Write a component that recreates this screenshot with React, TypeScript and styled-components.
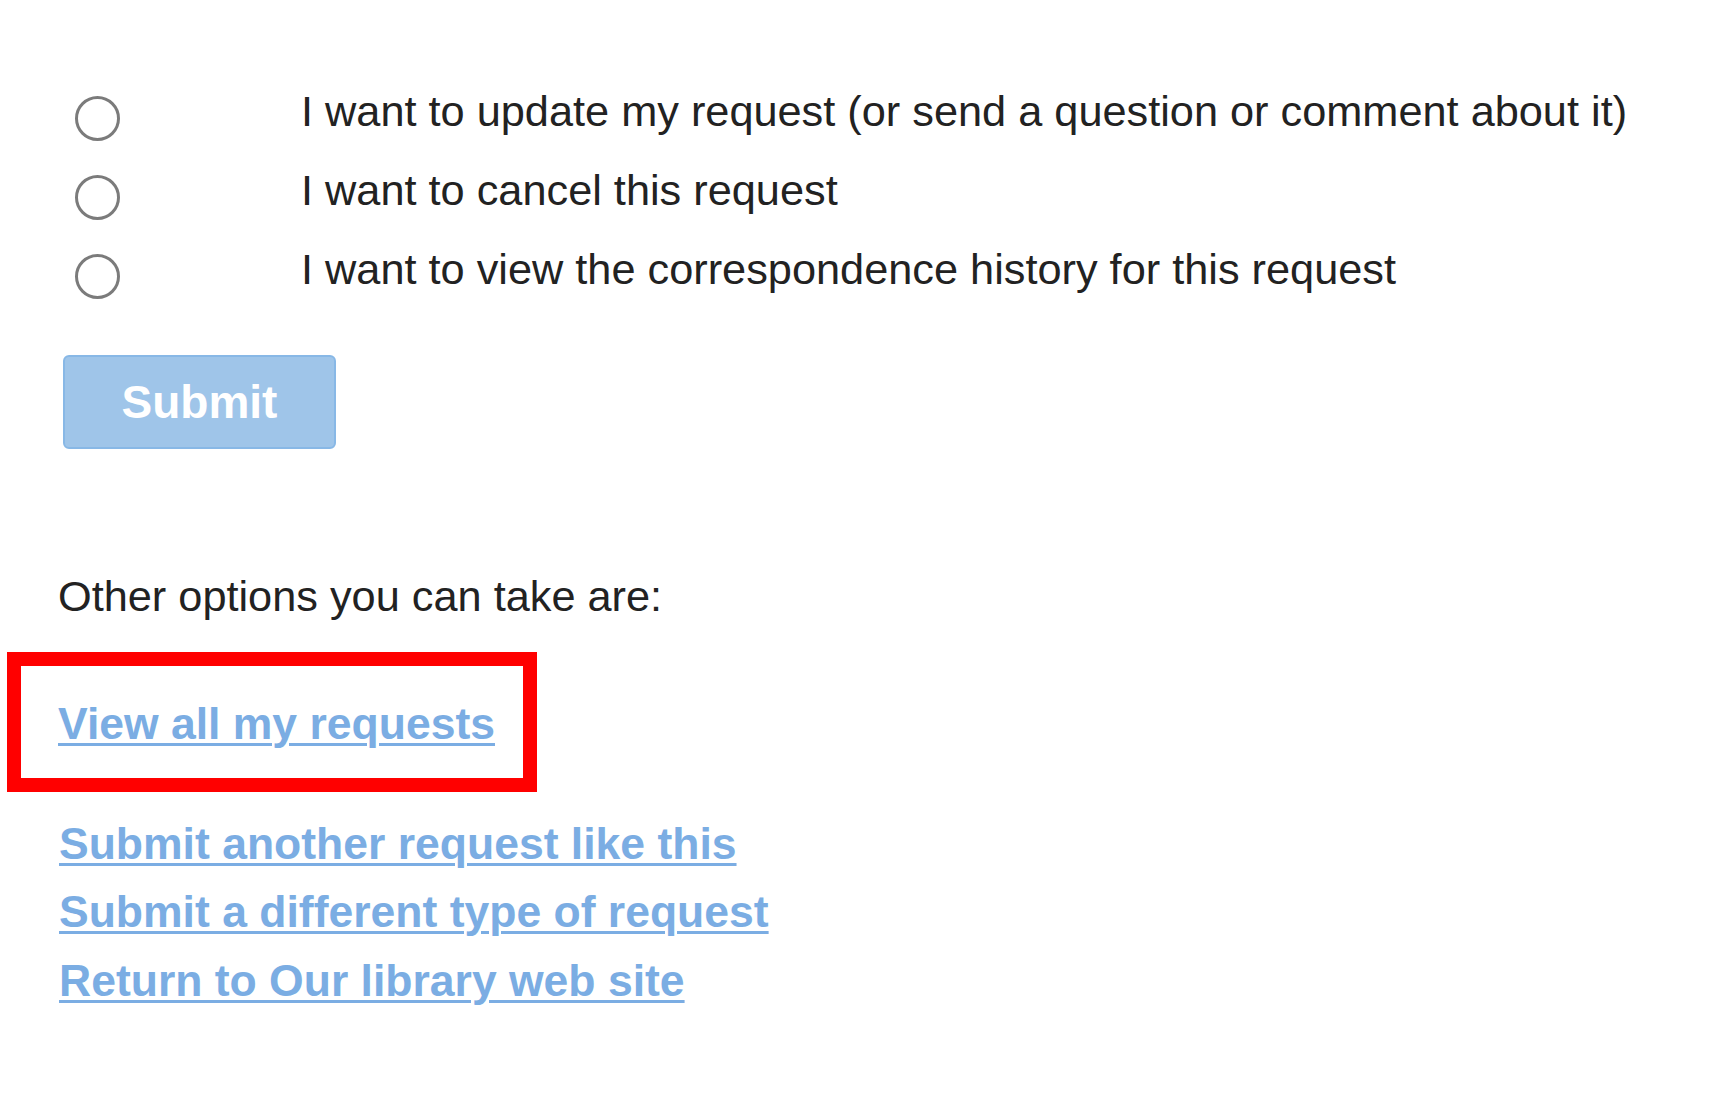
import React from "react";
import styled, { createGlobalStyle } from "styled-components";

const Global = createGlobalStyle`
  html, body {
    margin: 0;
    padding: 0;
    background: #ffffff;
  }
  body {
    font-family: "Liberation Sans", Arial, sans-serif;
    color: #222222;
  }
`;

const Page = styled.main`
  width: 1732px;
  height: 1117px;
  box-sizing: border-box;
  overflow: hidden;
  padding: 72px 0 0 58px;
  display: flex;
  flex-direction: column;
  align-items: flex-start;
`;

const Options = styled.fieldset`
  border: 0;
  margin: 0;
  padding: 0;
  display: flex;
  flex-direction: column;
`;

const OptionRow = styled.label`
  display: flex;
  align-items: center;
  height: 79px;
  font-size: 43.3px;
  line-height: 79px;
  white-space: nowrap;
  color: #222222;
`;

const Radio = styled.input.attrs({ type: "radio" })`
  appearance: none;
  -webkit-appearance: none;
  flex: none;
  box-sizing: border-box;
  width: 45px;
  height: 45px;
  margin: 13px 181px 0 17px;
  border: 3px solid #7b7b7b;
  border-radius: 50%;
  background: #ffffff;
`;

const SubmitButton = styled.button`
  display: block;
  margin: 46px 0 0 5px;
  width: 273px;
  height: 94px;
  padding: 0;
  box-sizing: border-box;
  background: #9fc5e9;
  border: 2px solid #88b8e6;
  border-radius: 6px;
  color: #ffffff;
  font-family: "Liberation Sans", Arial, sans-serif;
  font-weight: bold;
  font-size: 46px;
  line-height: 1;
`;

const Lead = styled.p`
  margin: 121.5px 0 0 0;
  font-size: 43.3px;
  line-height: 50px;
  color: #222222;
`;

const Highlight = styled.div`
  margin: 31px 0 0 -51px;
  width: 530px;
  box-sizing: border-box;
  border: 14px solid #ff0000;
  padding: 33px 0 29px 37px;
`;

const LinkList = styled.nav`
  margin-top: 18px;
  padding-left: 1px;
  display: flex;
  flex-direction: column;
  align-items: flex-start;
`;

const OptionLink = styled.a<{ $tall?: boolean }>`
  display: block;
  font-weight: bold;
  font-size: 44.5px;
  line-height: ${(p) => (p.$tall ? "50px" : "68.5px")};
  color: #7badE3;
  text-decoration: underline;
  text-decoration-thickness: 3px;
  text-underline-offset: 4px;
  white-space: nowrap;
`;

const options = [
  "I want to update my request (or send a question or comment about it)",
  "I want to cancel this request",
  "I want to view the correspondence history for this request",
];

const links = [
  "Submit another request like this",
  "Submit a different type of request",
  "Return to Our library web site",
];

export default function App() {
  return (
    <>
      <Global />
      <Page>
        <Options>
          {options.map((text) => (
            <OptionRow key={text}>
              <Radio name="action" />
              <span>{text}</span>
            </OptionRow>
          ))}
        </Options>
        <SubmitButton type="button">Submit</SubmitButton>
        <Lead>Other options you can take are:</Lead>
        <Highlight>
          <OptionLink href="#" $tall>
            View all my requests
          </OptionLink>
        </Highlight>
        <LinkList>
          {links.map((text) => (
            <OptionLink key={text} href="#">
              {text}
            </OptionLink>
          ))}
        </LinkList>
      </Page>
    </>
  );
}
